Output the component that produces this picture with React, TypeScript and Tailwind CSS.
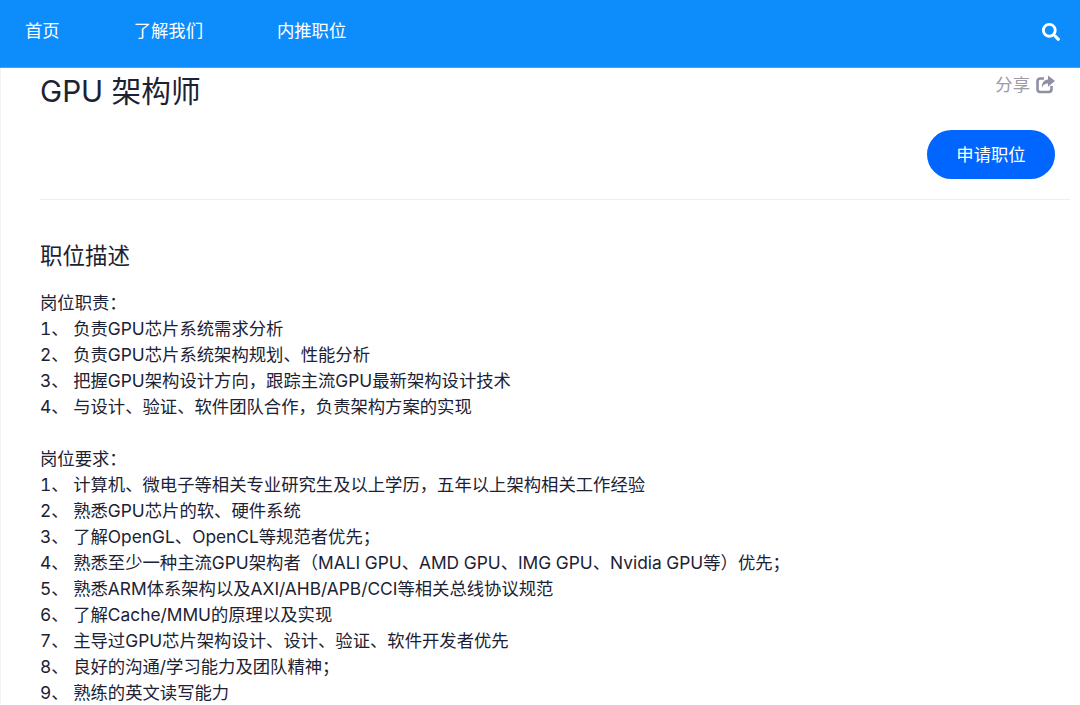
import { FaSearch } from "react-icons/fa";

const duties = [
  "岗位职责：",
  "1、 负责GPU芯片系统需求分析",
  "2、 负责GPU芯片系统架构规划、性能分析",
  "3、 把握GPU架构设计方向，跟踪主流GPU最新架构设计技术",
  "4、 与设计、验证、软件团队合作，负责架构方案的实现",
];

const requirements = [
  "岗位要求：",
  "1、 计算机、微电子等相关专业研究生及以上学历，五年以上架构相关工作经验",
  "2、 熟悉GPU芯片的软、硬件系统",
  "3、 了解OpenGL、OpenCL等规范者优先；",
  "4、 熟悉至少一种主流GPU架构者（MALI GPU、AMD GPU、IMG GPU、Nvidia GPU等）优先；",
  "5、 熟悉ARM体系架构以及AXI/AHB/APB/CCI等相关总线协议规范",
  "6、 了解Cache/MMU的原理以及实现",
  "7、 主导过GPU芯片架构设计、设计、验证、软件开发者优先",
  "8、 良好的沟通/学习能力及团队精神；",
  "9、 熟练的英文读写能力",
];

function ShareIcon() {
  return (
    <svg width="19" height="19" viewBox="0 0 19 19" className="text-[#8f8fa5]">
      <path d="M8 3.5H4.2a2.7 2.7 0 0 0-2.7 2.7v8.1a2.7 2.7 0 0 0 2.7 2.7h8.6a2.7 2.7 0 0 0 2.7-2.7V11" fill="none" stroke="currentColor" strokeWidth="2.6" />
      <path d="M12 0.5l7 5.6-7 5.6V8.6C9 8.6 7 9.8 6 13c-.6-4.8 2-8 6-8.4V.5z" fill="currentColor" />
    </svg>
  );
}

export default function App() {
  return (
    <div className="h-[705px] overflow-hidden bg-white font-['Inter','Noto_Sans_CJK_SC',sans-serif] text-[#1c2233]">
      <header className="flex h-[68px] items-center justify-between border-b border-[#3fa5fb] bg-[#0d8dfc] pb-[4px] pl-[25px] pr-[20px] text-white">
        <nav className="flex gap-[74px] pb-[2px] text-[17.33px]">
          <a>首页</a>
          <a>了解我们</a>
          <a>内推职位</a>
        </nav>
        <FaSearch className="h-[18px] w-[18px]" />
      </header>

      <main className="border-l border-[#f3f3f3] pl-[39px] pr-[10px]">
        <div className="border-b border-[#eeeef2] pb-5">
          <div className="flex items-start justify-between">
            <h1 className="text-[29.7px] leading-[46px]">GPU 架构师</h1>
            <div className="mr-[15px] mt-[4px] flex items-center gap-[6px] text-[17.33px] text-[#9b9bab]">
              <span>分享</span>
              <ShareIcon />
            </div>
          </div>
          <div className="mr-[15px] mt-[16px] flex justify-end">
            <button className="h-[49px] w-[128px] rounded-[25px] bg-[#0066ff] text-[17.33px] text-white">申请职位</button>
          </div>
        </div>

        <h2 className="mt-[37px] text-[22.5px] leading-[38px]">职位描述</h2>

        <div className="mt-[15px] text-[17.33px] leading-[26px] tabular-nums">
          {duties.map((line) => (
            <p key={line}>{line}</p>
          ))}
          <p className="h-[26px]" />
          {requirements.map((line) => (
            <p key={line}>{line}</p>
          ))}
        </div>
      </main>
    </div>
  );
}
